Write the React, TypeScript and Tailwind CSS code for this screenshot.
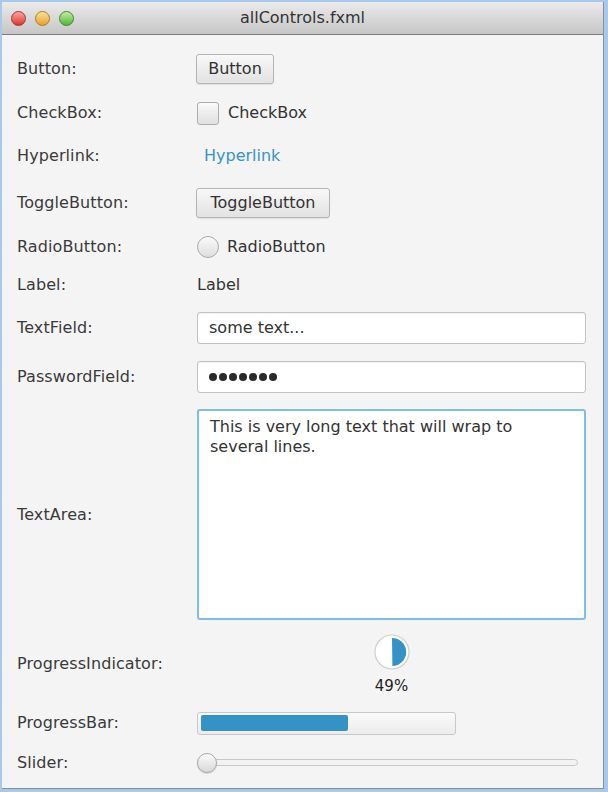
import React from 'react';

const font = { fontFamily: '"DejaVu Sans", "Liberation Sans", sans-serif' };

function Row({ label, h, mt = '', children }: { label: string; h: string; mt?: string; children: React.ReactNode }) {
  return (
    <div className={`flex items-center ${h} ${mt}`}>
      <div className="w-[195px] shrink-0 pl-[15px] text-[16px] tracking-[0.1px] text-[#3a3a3a]">{label}</div>
      <div className="flex h-full flex-1 items-center pr-[17px]">{children}</div>
    </div>
  );
}

function FxButton({ w, children }: { w: string; children: React.ReactNode }) {
  return (
    <div className={`flex h-[30px] items-center justify-center rounded-[3px] border border-[#b4b4b4] bg-gradient-to-b from-[#f8f8f8] to-[#e2e2e2] text-[16px] text-[#333] shadow-[0_1px_1px_rgba(0,0,0,0.08)] ${w}`}>
      {children}
    </div>
  );
}

function Light({ from, to, border }: { from: string; to: string; border: string }) {
  return <div className={`h-[15px] w-[15px] rounded-full border bg-gradient-to-b ${from} ${to} ${border}`} />;
}

export default function App() {
  return (
    <div className="h-[792px] w-[608px] bg-[#a7c9ec] pb-[3px] pl-[2px] pr-[4px] pt-[2px]" style={font}>
      <div className="flex h-full flex-col border-b border-r border-[#8f8f8f] bg-[#f4f4f4]">
        {/* title bar */}
        <div className="relative flex h-[33px] shrink-0 items-center border-b border-[#7d7d7d] bg-gradient-to-b from-[#ebebeb] to-[#c6c6c6] pl-[9px]">
          <div className="flex gap-[9px]">
            <Light from="from-[#f7a3a0]" to="to-[#d9302b]" border="border-[#a5342f]" />
            <Light from="from-[#fbe09a]" to="to-[#e2a420]" border="border-[#a97d22]" />
            <Light from="from-[#c4ec9e]" to="to-[#53b33a]" border="border-[#3f8a2e]" />
          </div>
          <div className="absolute inset-0 flex items-center justify-center text-[16px] text-[#333]">allControls.fxml</div>
        </div>

        <div className="flex flex-col pt-[19px]">
          <Row label="Button:" h="h-[30px]">
            <div className="-ml-[1px]">
              <FxButton w="w-[78px]">Button</FxButton>
            </div>
          </Row>

          <Row label="CheckBox:" h="h-[58px]">
            <div className="h-[23px] w-[22px] rounded-[3px] border border-[#acacac] bg-gradient-to-b from-[#fafafa] to-[#e0e0e0]" />
            <span className="ml-[9px] text-[16px] text-[#333]">CheckBox</span>
          </Row>

          <Row label="Hyperlink:" h="h-[28px]">
            <span className="ml-[7px] text-[16px] text-[#3a92c8]">Hyperlink</span>
          </Row>

          <Row label="ToggleButton:" h="h-[66px]">
            <div className="-ml-[1px]">
              <FxButton w="w-[134px]">ToggleButton</FxButton>
            </div>
          </Row>

          <Row label="RadioButton:" h="h-[22px]">
            <div className="h-[22px] w-[22px] rounded-full border border-[#acacac] bg-gradient-to-b from-[#fafafa] to-[#dedede]" />
            <span className="ml-[8px] text-[16px] text-[#333]">RadioButton</span>
          </Row>

          <Row label="Label:" h="h-[54px]">
            <span className="text-[16px] text-[#333]">Label</span>
          </Row>

          <Row label="TextField:" h="h-[32px]">
            <div className="flex h-full w-full items-center rounded-[3px] border border-[#c3c3c3] bg-white px-[11px] text-[16px] text-[#333] shadow-[inset_0_1px_1px_rgba(0,0,0,0.06)]">
              some text...
            </div>
          </Row>

          <Row label="PasswordField:" h="h-[32px]" mt="mt-[17px]">
            <div className="flex h-full w-full items-center gap-[2px] rounded-[3px] border border-[#c3c3c3] bg-white px-[11px] shadow-[inset_0_1px_1px_rgba(0,0,0,0.06)]">
              {[0, 1, 2, 3, 4, 5, 6].map((i) => (
                <span key={i} className="h-[8px] w-[8px] rounded-full bg-[#2a2a2a]" />
              ))}
            </div>
          </Row>

          <Row label="TextArea:" h="h-[211px]" mt="mt-[16px]">
            <div className="h-full w-full rounded-[3px] border-2 border-[#80bde6] bg-white px-[11px] pt-[6px] text-[16px] leading-[20px] text-[#333]">
              This is very long text that will wrap to
              <br />
              several lines.
            </div>
          </Row>

          <Row label="ProgressIndicator:" h="h-[88px]">
            <div className="flex w-full flex-col items-center gap-[8px]">
              <svg width="36" height="36" viewBox="0 0 36 36">
                <circle cx="18" cy="18" r="17" fill="#ffffff" stroke="#cfcfcf" strokeWidth="1.2" />
                <path d="M18 4 A14 14 0 0 1 18.4 32 Z" fill="#3592c6" />
              </svg>
              <span className="text-[15px] leading-[16px] text-[#222]">49%</span>
            </div>
          </Row>

          <Row label="ProgressBar:" h="h-[30px]">
            <div className="flex h-[23px] w-[259px] items-center rounded-[3px] border border-[#c8c8c8] bg-gradient-to-b from-[#fafafa] to-[#ececec] px-[3px]">
              <div className="h-[16px] w-[147px] rounded-[2px] bg-[#3592c6]" />
            </div>
          </Row>

          <Row label="Slider:" h="h-[49px]">
            <div className="relative flex h-[20px] w-[381px] items-center">
              <div className="h-[7px] w-full rounded-full border border-[#c8c8c8] bg-[#f2f2f2]" />
              <div className="absolute left-0 top-0 h-[20px] w-[20px] rounded-full border border-[#a8a8a8] bg-gradient-to-b from-[#fbfbfb] to-[#d8d8d8] shadow-[0_1px_1px_rgba(0,0,0,0.15)]" />
            </div>
          </Row>
        </div>
      </div>
    </div>
  );
}
